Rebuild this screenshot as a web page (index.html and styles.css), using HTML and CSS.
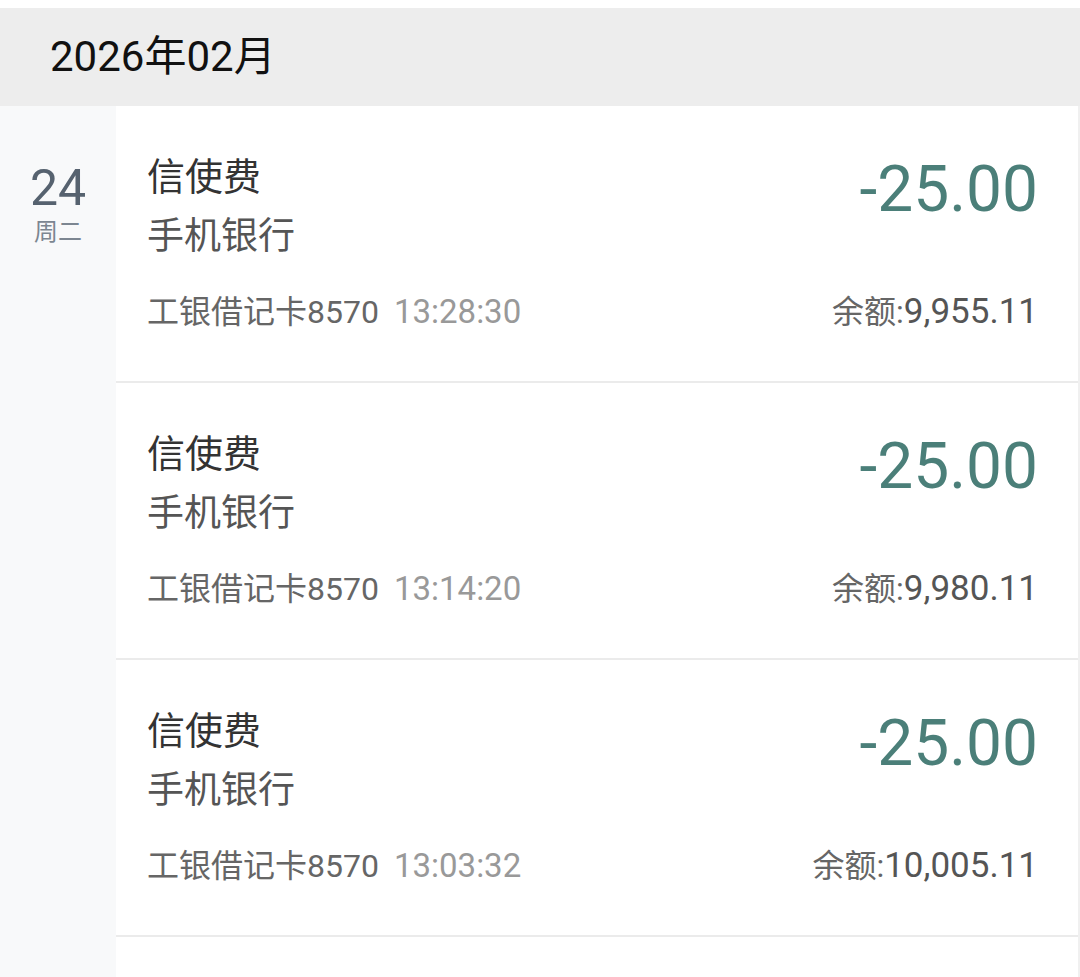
FILE: index.html
```html
<!DOCTYPE html>
<html>
<head>
	<meta charset="utf-8"/>
	<title>账单明细</title>
	<link rel="stylesheet" href="styles.css">
</head>
<body>

	<div class="month">2026年02月</div>

	<div class="day_group">
		<div class="day">
			<b class="day_num">24</b>
			<span class="day_week">周二</span>
		</div>

		<div class="list">
			<div class="item">
				<div class="item_top">
					<div class="item_info">
						<p class="item_title">信使费</p>
						<p class="item_sub">手机银行</p>
					</div>
					<div class="item_amount">-25.00</div>
				</div>
				<div class="item_meta">
					<span class="card">工银借记卡8570<span class="time">13:28:30</span></span>
					<span class="balance">余额:<em>9,955.11</em></span>
				</div>
			</div>

			<div class="item">
				<div class="item_top">
					<div class="item_info">
						<p class="item_title">信使费</p>
						<p class="item_sub">手机银行</p>
					</div>
					<div class="item_amount">-25.00</div>
				</div>
				<div class="item_meta">
					<span class="card">工银借记卡8570<span class="time">13:14:20</span></span>
					<span class="balance">余额:<em>9,980.11</em></span>
				</div>
			</div>

			<div class="item">
				<div class="item_top">
					<div class="item_info">
						<p class="item_title">信使费</p>
						<p class="item_sub">手机银行</p>
					</div>
					<div class="item_amount">-25.00</div>
				</div>
				<div class="item_meta">
					<span class="card">工银借记卡8570<span class="time">13:03:32</span></span>
					<span class="balance">余额:<em>10,005.11</em></span>
				</div>
			</div>

			<div class="item"></div>
		</div>
	</div>

</body>
</html>
```

FILE: styles.css
```css
*{
	margin:0;padding:0;
}
body{
	background:#fff;
	font-family:Roboto,"Noto Sans CJK SC",sans-serif;
	overflow:hidden;
}

.month{
	margin-top:8px;
	height:98px;
	line-height:98px;
	padding-left:50px;
	background:#ededed;
	font-size:42px;
	color:#111;
}

.day_group{
	display:flex;
}
.day{
	width:116px;
	background:#f8f9fa;
	text-align:center;
	display:flex;
	flex-direction:column;
	align-items:center;
	padding-top:54px;
}
.day_num{
	font-weight:normal;
	font-size:50px;
	line-height:56px;
	color:#56626f;
}
.day_week{
	font-size:24px;
	line-height:32px;
	color:#7c8691;
}

.list{
	flex:1;
	background:#fff;
	border-right:2px solid #f0f0f0;
}
.item{
	height:275px;
	border-bottom:2px solid #ebebeb;
	padding:0 40px 0 31px;
}
.item_top{
	display:flex;
	justify-content:space-between;
}
.item_info{
	padding-top:41px;
}
.item_title{
	font-size:38px;
	line-height:60px;
	color:#333;
}
.item_sub{
	font-size:37px;
	line-height:60px;
	color:#555;
}
.item_amount{
	margin-top:42px;
	font-size:64px;
	line-height:84px;
	color:#4b7f79;
}
.item_meta{
	display:flex;
	justify-content:space-between;
	margin-top:20px;
	line-height:50px;
	font-size:32px;
	color:#666;
}
.time{
	margin-left:15px;
	font-size:33px;
	color:#999;
}
.balance em{
	font-style:normal;
	font-size:35px;
	color:#555;
}
```
